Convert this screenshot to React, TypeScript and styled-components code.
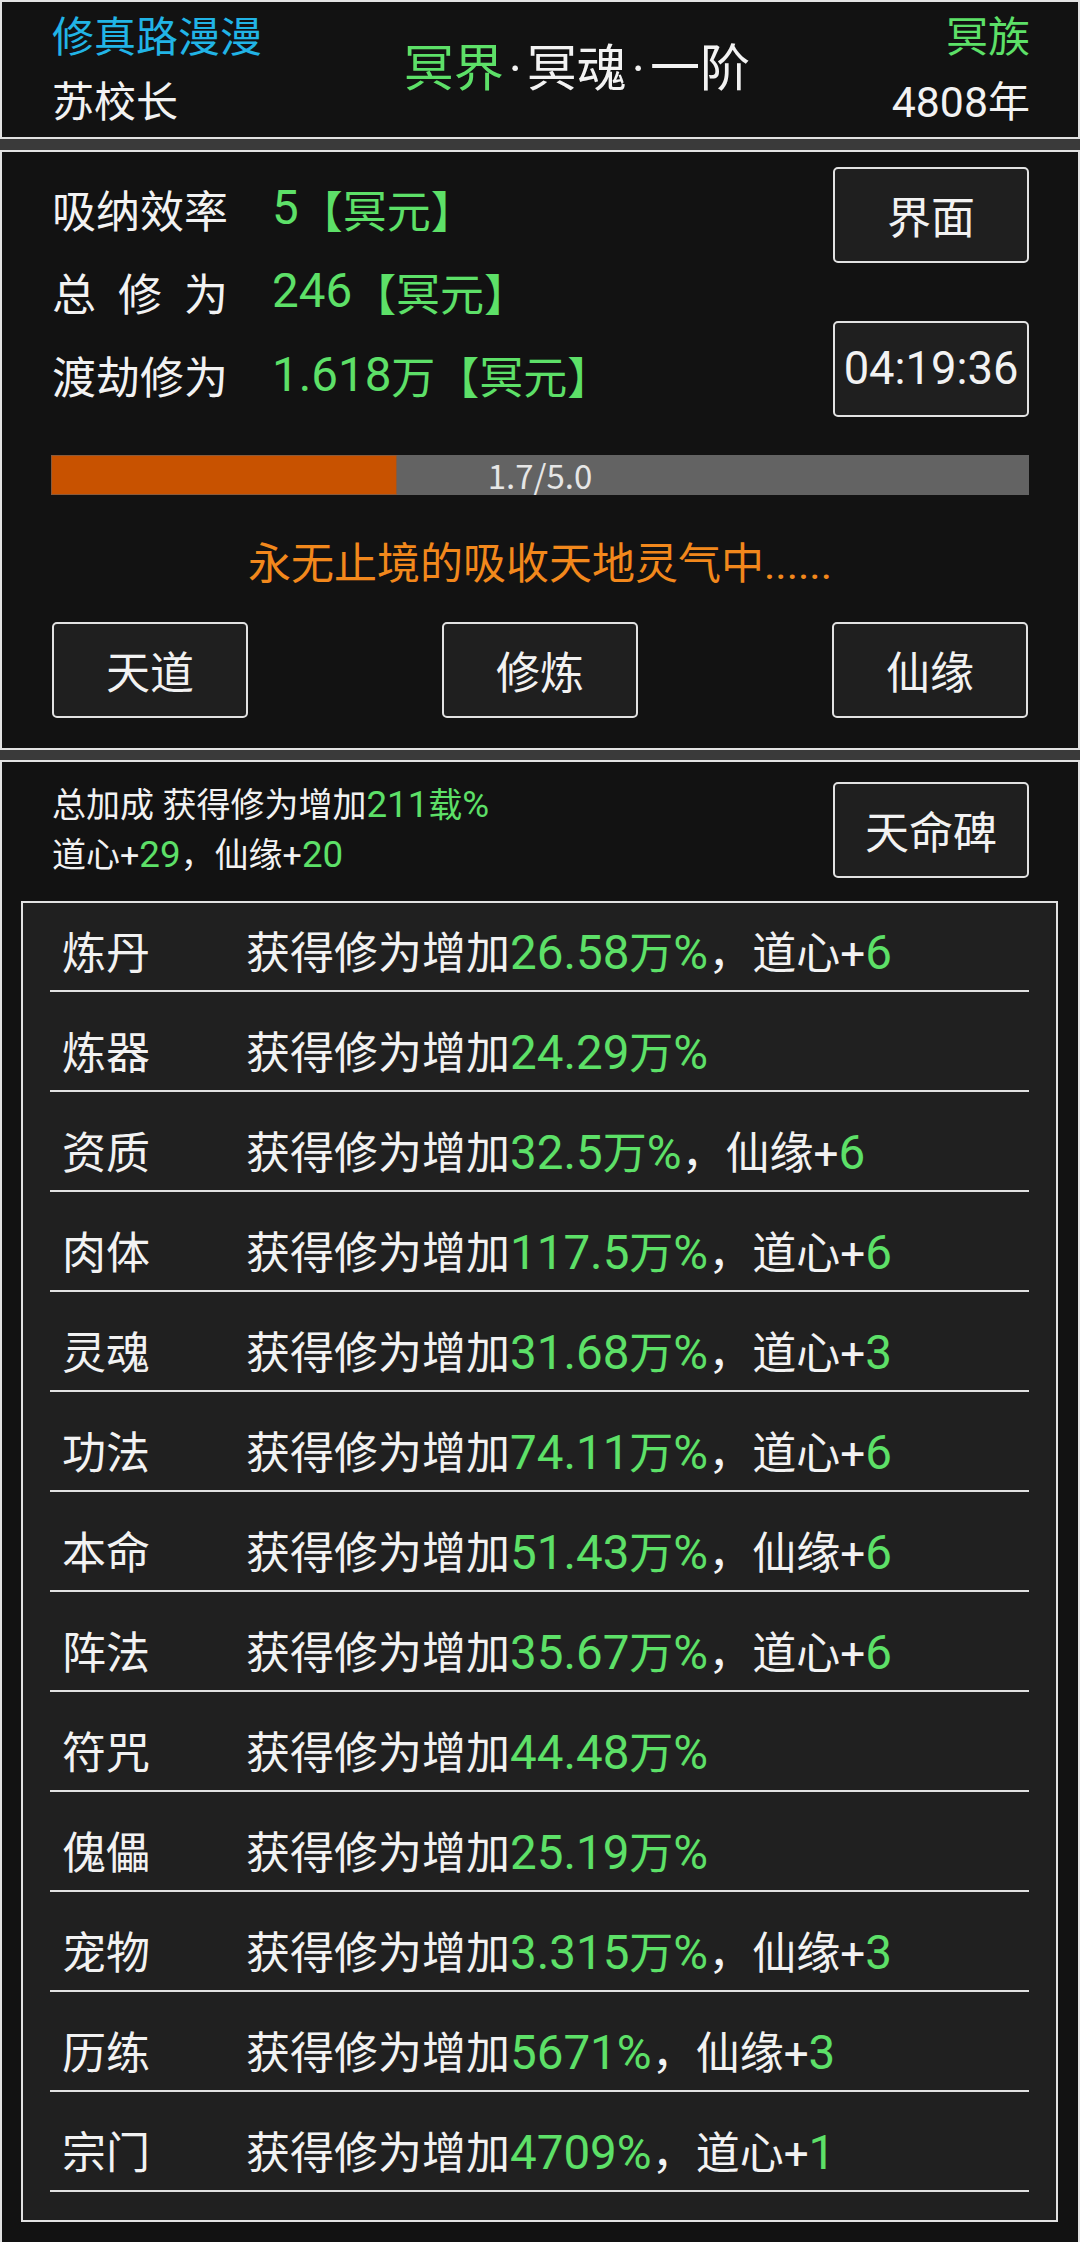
import React from 'react';
import styled, { createGlobalStyle } from 'styled-components';

const GREEN = '#5de068';
const WHITE = '#f2f2f2';
const LINE = '#e2e2e2';

const GlobalStyle = createGlobalStyle`
  html, body {
    margin: 0;
    padding: 0;
    background: #3a3a3a;
  }
  body {
    font-family: Roboto, "Noto Sans CJK SC", sans-serif;
    color: ${WHITE};
  }
  * {
    box-sizing: border-box;
  }
`;

const Page = styled.div`
  width: 1080px;
  display: flex;
  flex-direction: column;
`;

const Panel = styled.section<{ gap?: number }>`
  background: #121212;
  border: 2px solid ${LINE};
  margin-bottom: ${(p) => p.gap ?? 0}px;
`;

const Header = styled(Panel)`
  height: 139px;
  display: flex;
  align-items: center;
  padding: 0 48px 0 50px;
`;

const HeaderCol = styled.div<{ align?: string }>`
  display: flex;
  flex-direction: column;
  text-align: ${(p) => p.align ?? 'left'};
  font-size: 42px;
  line-height: 65px;
`;

const Realm = styled.div`
  flex: 1;
  text-align: center;
  font-size: 50px;
  line-height: 65px;
`;

const Dot = styled.span`
  margin: 0 5px;
`;

const Green = styled.span`
  color: ${GREEN};
`;

// digits in the game render a little taller than the CJK text around them
const Num = styled.span<{ white?: boolean; scale?: number }>`
  color: ${(p) => (p.white ? WHITE : GREEN)};
  font-size: ${(p) => p.scale ?? 1.08}em;
  line-height: 1;
`;

const Cyan = styled.span`
  color: #21b4e6;
`;

const TopRow = styled.div`
  display: flex;
  justify-content: space-between;
  padding: 15px 49px 0 50px;
`;

const StatList = styled.div`
  height: 250px;
  display: flex;
  flex-direction: column;
  justify-content: space-between;
`;

const StatRow = styled.div`
  display: flex;
  align-items: center;
  height: 96px;
  font-size: 44px;
`;

const StatLabel = styled.span<{ spread?: number }>`
  width: 220px;
  letter-spacing: ${(p) => p.spread ?? 0}px;
`;

const SideButtons = styled.div`
  height: 250px;
  display: flex;
  flex-direction: column;
  justify-content: space-between;
`;

const Button = styled.button`
  width: 196px;
  height: 96px;
  flex-shrink: 0;
  background: #1f1f1f;
  border: 2px solid ${LINE};
  border-radius: 5px;
  color: ${WHITE};
  font-family: inherit;
  font-size: 44px;
  padding: 0;
  display: flex;
  align-items: center;
  justify-content: center;
  white-space: nowrap;
`;

const Bar = styled.div`
  position: relative;
  margin: 38px 49px 0;
  height: 40px;
  background: #636363;
`;

const BarFill = styled.div`
  height: 100%;
  background: #c85200;
  border: 1px solid #8a5a3a;
`;

const BarText = styled.span`
  position: absolute;
  inset: 0;
  display: flex;
  align-items: center;
  justify-content: center;
  font-family: "Noto Sans CJK SC", sans-serif;
  font-size: 33px;
  color: #e6e6e6;
`;

const Status = styled.div`
  margin-top: 39px;
  text-align: center;
  font-size: 43px;
  line-height: 60px;
  color: #f2881c;
`;

const ActionRow = styled.div`
  display: flex;
  justify-content: space-between;
  padding: 28px 50px 30px;
`;

const BonusHead = styled.div`
  height: 116px;
  display: flex;
  align-items: center;
  justify-content: space-between;
  padding: 20px 49px 0 50px;
`;

const BonusText = styled.div`
  font-size: 34px;
  line-height: 50px;
`;

const Table = styled.div`
  margin: 23px 20px 20px 19px;
  background: #202020;
  border: 2px solid ${LINE};
  padding: 7px 27px 28px;
  display: flex;
  flex-direction: column;
  gap: 18px;
`;

const Row = styled.div`
  height: 82px;
  display: flex;
  align-items: center;
  padding-left: 12px;
  border-bottom: 2px solid ${LINE};
  font-size: 44px;
`;

const RowName = styled.span`
  width: 184px;
  flex-shrink: 0;
`;

type Bonus = { name: string; pct: string; extra?: [string, string] };

const bonuses: Bonus[] = [
  { name: '炼丹', pct: '26.58万%', extra: ['道心', '6'] },
  { name: '炼器', pct: '24.29万%' },
  { name: '资质', pct: '32.5万%', extra: ['仙缘', '6'] },
  { name: '肉体', pct: '117.5万%', extra: ['道心', '6'] },
  { name: '灵魂', pct: '31.68万%', extra: ['道心', '3'] },
  { name: '功法', pct: '74.11万%', extra: ['道心', '6'] },
  { name: '本命', pct: '51.43万%', extra: ['仙缘', '6'] },
  { name: '阵法', pct: '35.67万%', extra: ['道心', '6'] },
  { name: '符咒', pct: '44.48万%' },
  { name: '傀儡', pct: '25.19万%' },
  { name: '宠物', pct: '3.315万%', extra: ['仙缘', '3'] },
  { name: '历练', pct: '5671%', extra: ['仙缘', '3'] },
  { name: '宗门', pct: '4709%', extra: ['道心', '1'] },
];

// splits "26.58万%" into digits / unit / percent so digits get the taller style
const Amount = ({ text }: { text: string }) => {
  const m = text.match(/^([\d.]+)([^%]*)(%?)$/);
  if (!m) return <Green>{text}</Green>;
  return (
    <>
      <Num>{m[1]}</Num>
      {m[2] && <Green>{m[2]}</Green>}
      {m[3] && <Num>{m[3]}</Num>}
    </>
  );
};

export default function App() {
  const progress = 1.7 / 5.0;

  return (
    <Page>
      <GlobalStyle />
      <Header gap={11}>
        <HeaderCol>
          <Cyan>修真路漫漫</Cyan>
          <span>苏校长</span>
        </HeaderCol>
        <Realm>
          <Green>冥界</Green>
          <Dot>·</Dot>冥魂<Dot>·</Dot>一阶
        </Realm>
        <HeaderCol align="right">
          <Green>冥族</Green>
          <span>
            <Num white scale={1.02}>
              4808
            </Num>
            年
          </span>
        </HeaderCol>
      </Header>

      <Panel gap={10}>
        <TopRow>
          <StatList>
            <StatRow>
              <StatLabel>吸纳效率</StatLabel>
              <Amount text="5【冥元】" />
            </StatRow>
            <StatRow>
              <StatLabel spread={22}>总修为</StatLabel>
              <Amount text="246【冥元】" />
            </StatRow>
            <StatRow>
              <StatLabel>渡劫修为</StatLabel>
              <Amount text="1.618万【冥元】" />
            </StatRow>
          </StatList>
          <SideButtons>
            <Button>界面</Button>
            <Button>
              <Num white scale={1.03}>
                04:19:36
              </Num>
            </Button>
          </SideButtons>
        </TopRow>

        <Bar>
          <BarFill style={{ width: `${progress * 104}%` }} />
          <BarText>1.7/5.0</BarText>
        </Bar>

        <Status>永无止境的吸收天地灵气中......</Status>

        <ActionRow>
          <Button>天道</Button>
          <Button>修炼</Button>
          <Button>仙缘</Button>
        </ActionRow>
      </Panel>

      <Panel>
        <BonusHead>
          <BonusText>
            <div>
              总加成 获得修为增加<Amount text="211载%" />
            </div>
            <div>
              道心+<Num>29</Num>，仙缘+<Num>20</Num>
            </div>
          </BonusText>
          <Button>天命碑</Button>
        </BonusHead>

        <Table>
          {bonuses.map((b) => (
            <Row key={b.name}>
              <RowName>{b.name}</RowName>
              <span>
                获得修为增加
                <Amount text={b.pct} />
                {b.extra && (
                  <>
                    ，{b.extra[0]}+<Num>{b.extra[1]}</Num>
                  </>
                )}
              </span>
            </Row>
          ))}
        </Table>
      </Panel>
    </Page>
  );
}
